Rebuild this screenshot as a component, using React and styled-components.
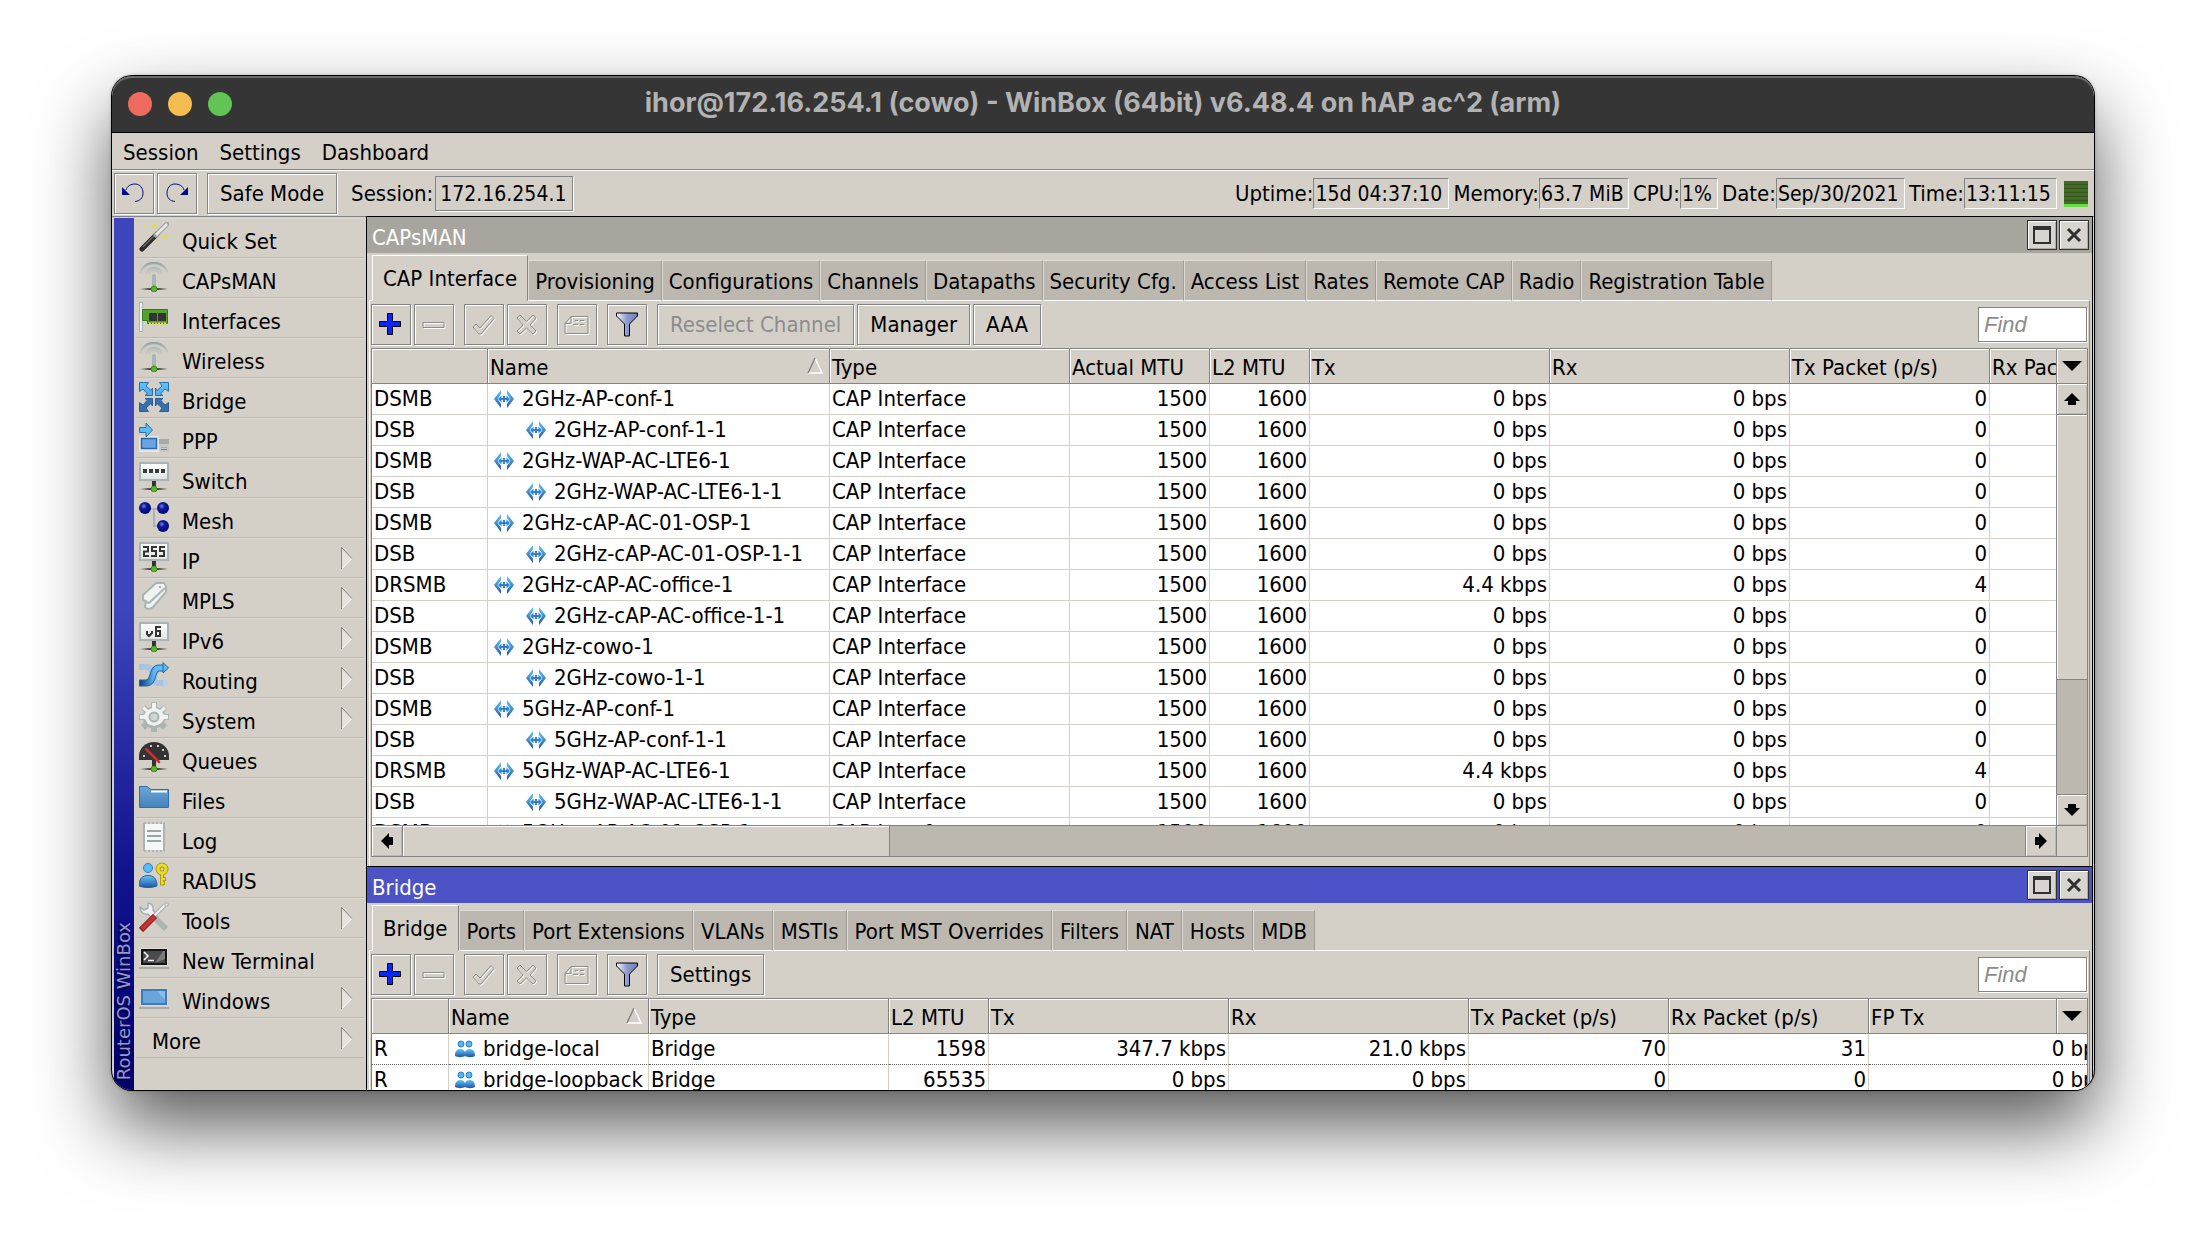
import React, { useState } from "react";
import styled, { createGlobalStyle, css } from "styled-components";

const GlobalStyle = createGlobalStyle`
    * {
        box-sizing: border-box;
    }
    body {
        margin: 0;
        background: #fff;
        color: #000;
        font-family: "DejaVu Sans Condensed", "DejaVu Sans", Tahoma, sans-serif;
        font-size: 22px;
        font-stretch: condensed;
    }
    button, input {
        font: inherit;
        color: inherit;
        margin: 0;
        border-radius: 0;
    }
`;

const raised = css`
    background: #d4d0c8;
    border: 1px solid #848484;
    box-shadow: 1px 1px 0 #fff, inset 1px 1px 0 #fff;
`;

const Desktop = styled.div`
    height: 100vh;
    padding: 76px 112px 148px;
    overflow: hidden;
`;

const Window = styled.div`
    height: 100%;
    display: flex;
    flex-direction: column;
    overflow: hidden;
    background: #d4d0c8;
    border-radius: 20px;
    box-shadow: 0 0 0 1px #000, 0 0 4px rgba(0, 0, 0, 0.3), 0 36px 76px rgba(0, 0, 0, 0.66);
`;

const TitleBar = styled.header`
    flex: none;
    height: 57px;
    display: grid;
    grid-template-columns: 1fr auto 1fr;
    align-items: center;
    padding: 0 16px;
    background: #353535;
    border-bottom: 1px solid #000;
    box-shadow: inset 0 2px 0 #6b6b6b;
    border-radius: 20px 20px 0 0;
    h1 {
        margin: 0;
        padding-bottom: 4px;
        font: bold 27px Inter, sans-serif;
        color: #b2b2b2;
    }
`;

const Lights = styled.div`
    display: flex;
    gap: 16px;
`;

const Light = styled.button`
    width: 24px;
    height: 24px;
    padding: 0;
    border: none;
    border-radius: 50%;
    background: ${(p) => p.$color};
`;

const MenuBar = styled.nav`
    flex: none;
    display: flex;
    gap: 21px;
    height: 37px;
    padding: 2px 11px 0;
    border-bottom: 1px solid #848484;
    button {
        padding: 0;
        border: none;
        background: none;
    }
`;

const MainBar = styled.div`
    flex: none;
    display: flex;
    align-items: center;
    height: 47px;
    padding: 0 6px 0 2px;
    border-top: 1px solid #fff;
    border-bottom: 1px solid #848484;
`;

const ToolButton = styled.button`
    ${raised}
    flex: none;
    height: 41px;
    min-width: 40px;
    display: flex;
    align-items: center;
    justify-content: center;
    padding: 0 ${(p) => (p.$text ? 12 : 0)}px;
    margin-right: ${(p) => (p.$last ? 10 : 3)}px;
    &:disabled {
        color: #8c8c8c;
    }
`;

const SessionLabel = styled.label`
    display: flex;
    align-items: center;
    gap: 2px;
    margin-left: 4px;
`;

const ReadOut = styled.input`
    width: ${(p) => p.$w}px;
    height: ${(p) => p.$h || 31}px;
    padding: 0 1px;
    font-size: 21px;
    background: #d4d0c8;
    border: 1px solid;
    border-color: #848484 #fff #fff #848484;
    outline: none;
`;

const SessionBox = styled(ReadOut)`
    padding: 0 4px;
    border-color: #848484;
    box-shadow: 1px 1px 0 #fff;
`;

const Status = styled.div`
    margin-left: auto;
    display: flex;
    align-items: center;
    gap: 4px;
    label {
        display: flex;
        align-items: center;
    }
`;

const CpuGraph = styled.div`
    width: 24px;
    height: 26px;
    margin-left: 3px;
    border-bottom: 3px solid #62e043;
    background: repeating-linear-gradient(#436b26 0 3px, #35561c 3px 4px);
`;

const Body = styled.div`
    flex: 1;
    min-height: 0;
    display: grid;
    grid-template-columns: 254px minmax(0, 1fr);
`;

const Sidebar = styled.aside`
    display: flex;
    min-height: 0;
    padding: 1px 2px 0;
`;

const Strip = styled.div`
    width: 20px;
    display: flex;
    align-items: center;
    padding-bottom: 10px;
    background: linear-gradient(#3d44bc 0 45%, #10148c 75%, #00006c);
    span {
        margin-top: auto;
        writing-mode: vertical-rl;
        transform: rotate(180deg);
        font: 18px/20px "DejaVu Sans", sans-serif;
        font-stretch: normal;
        white-space: nowrap;
        color: #9797c8;
        text-shadow: -2px -2px 2px #000040;
    }
`;

const MenuList = styled.ul`
    flex: 1;
    margin: 0;
    padding: 0 0 0 2px;
    list-style: none;
`;

const MenuItem = styled.button`
    width: 100%;
    height: 40px;
    display: flex;
    align-items: flex-start;
    padding: 4px 11px 0 3px;
    border: none;
    border-bottom: 1px solid #bcb8b0;
    box-shadow: inset 0 1px 0 #dedad4;
    background: none;
    text-align: left;
    svg {
        flex: none;
    }
    span {
        flex: 1;
        line-height: 36px;
        padding-top: 2px;
        padding-left: 13px;
    }
`;

const Panels = styled.main`
    display: grid;
    grid-template-rows: minmax(0, 650fr) minmax(0, 224fr);
    min-height: 0;
    margin-top: -1px;
    margin-right: 1px;
`;

const Panel = styled.section`
    min-height: 0;
    display: flex;
    flex-direction: column;
    overflow: hidden;
    border: 1px solid #000;
    border-bottom: none;
`;

const PanelTitle = styled.div`
    flex: none;
    height: 36px;
    display: flex;
    align-items: center;
    gap: 2px;
    padding: 0 3px 0 5px;
    color: #fff;
    background: ${(p) => (p.$active ? "#4b53c6" : "#a8a59f")};
    h2 {
        flex: 1;
        margin: 0;
        padding-top: 4px;
        font-size: 22px;
        font-weight: normal;
    }
`;

const TitleButton = styled.button`
    width: 30px;
    height: 30px;
    display: grid;
    place-items: center;
    padding: 0;
    background: #d8d4d0;
    border: 1px solid #303030;
    box-shadow: inset 1px 1px 0 #fff, inset -1px -1px 0 #b0aca4;
`;

const Tabs = styled.div`
    flex: none;
    height: 48px;
    display: flex;
    align-items: flex-end;
    padding-left: 5px;
    margin-bottom: -1px;
    z-index: 1;
`;

const Tab = styled.button`
    height: 41px;
    padding: 2px ${(p) => (p.$tight ? 6 : 7)}px 0;
    white-space: nowrap;
    border: 1px solid;
    border-color: #e0dcd6 #a09c96 #fff #dedad4;
    background: #bcb8b0;
    ${(p) =>
        p.$active &&
        css`
            height: 46px;
            padding: 0 10px;
            background: #d4d0c8;
            border-color: #fff #848484 #d4d0c8 #fff;
        `}
`;

const Frame = styled.div`
    flex: 1;
    min-height: 0;
    display: flex;
    flex-direction: column;
    margin: 0 2px;
    padding: 0 1px ${(p) => p.$bottom}px;
    border: 1px solid;
    border-color: #fff #848484 transparent #fff;
    border-bottom: none;
`;

const Toolbar = styled.div`
    flex: none;
    display: flex;
    align-items: center;
    padding: 3px 1px 3px 0;
`;

const Find = styled.input`
    width: 109px;
    height: 35px;
    margin-left: auto;
    padding: 0 5px;
    background: #fff;
    border: 1px solid #848484;
    box-shadow: 1px 1px 0 #fff;
    font-family: "Liberation Sans", Arial, sans-serif;
    &::placeholder {
        color: #8c8c8c;
        font-style: italic;
        opacity: 1;
    }
`;

const Grid = styled.div`
    position: relative;
    flex: 1;
    min-height: 0;
    display: grid;
    grid-template-columns: minmax(0, 1fr) auto;
    grid-template-rows: minmax(0, 1fr) auto;
    border: 1px solid #848484;
    ${(p) => p.$cut && "border-bottom: none;"}
    background: #fff;
`;

const Scroller = styled.div`
    overflow: hidden;
`;

const Table = styled.table`
    width: 100%;
    table-layout: fixed;
    border-collapse: separate;
    border-spacing: 0;
    th, td {
        padding: 0 2px;
        overflow: hidden;
        white-space: nowrap;
        text-align: left;
        font-weight: normal;
    }
    th {
        height: 35px;
        padding-top: 2px;
        background: #d4d0c8;
        border-right: 1px solid #848484;
        border-bottom: 1px solid #848484;
        box-shadow: inset 1px 1px 0 #fff;
    }
    td {
        height: 31px;
        line-height: 30px;
        border-right: 1px solid #d4d0c8;
        border-bottom: 1px solid #d4d0c8;
    }
    td.num {
        text-align: right;
    }
    tr.current td {
        border-bottom: 1px dotted #606060;
    }
`;

const HeadSort = styled.div`
    display: flex;
    align-items: center;
    justify-content: space-between;
    padding-right: 4px;
    svg {
        margin-bottom: 4px;
    }
`;

const NameCell = styled.div`
    display: flex;
    align-items: center;
    gap: 8px;
    padding-left: ${(p) => (p.$child ? 36 : 4)}px;
    height: 30px;
`;

const DropButton = styled.button`
    position: absolute;
    top: 0;
    right: 0;
    width: 31px;
    height: 35px;
    display: grid;
    place-items: center;
    padding: 0;
    background: #d4d0c8;
    border: none;
    border-left: 1px solid #848484;
    border-bottom: 1px solid #848484;
    box-shadow: inset 1px 1px 0 #fff;
`;

const ScrollButton = styled.button`
    flex: none;
    width: 30px;
    height: 30px;
    display: grid;
    place-items: center;
    padding: 0;
    border: none;
    background: #d4d0c8;
    box-shadow: inset 1px 1px 0 #fff, inset -1px -1px 0 #bcb8b0;
`;

const VScroll = styled.div`
    width: 31px;
    padding-top: 35px;
    display: flex;
    flex-direction: column;
    border-left: 1px solid #848484;
    background: #bcb8b0;
`;

const HScroll = styled.div`
    display: flex;
    height: 31px;
    border-top: 1px solid #848484;
    background: #bcb8b0;
`;

const Corner = styled.div`
    background: #d4d0c8;
    border-top: 1px solid #848484;
    border-left: 1px solid #848484;
`;

const Track = styled.div`
    flex: 1;
    border: 0 solid #848484;
    border-width: ${(p) => (p.$vertical ? "1px 0" : "0 1px")};
`;

const Thumb = styled.div`
    background: #d4d0c8;
    box-shadow: inset 1px 1px 0 #fff;
    ${(p) =>
        p.$vertical
            ? css`
                  height: 70%;
                  border-bottom: 1px solid #848484;
              `
            : css`
                  width: 30%;
                  height: 100%;
                  border-right: 1px solid #848484;
              `}
`;

const Defs = () => (
    <svg width="0" height="0" style={{ display: "block" }} aria-hidden="true">
        <defs>
            <linearGradient id="sky" x1="0" y1="0" x2="0" y2="30" gradientUnits="userSpaceOnUse">
                <stop offset="0" stopColor="#5cc4ff" />
                <stop offset="0.45" stopColor="#4fabec" />
                <stop offset="1" stopColor="#1d4785" />
            </linearGradient>
            <linearGradient id="skyBox" x1="0" y1="0" x2="0" y2="1">
                <stop offset="0" stopColor="#62c6fa" />
                <stop offset="1" stopColor="#1f559f" />
            </linearGradient>
            <linearGradient id="route" x1="0" y1="0" x2="1" y2="0">
                <stop offset="0" stopColor="#123f80" />
                <stop offset="0.6" stopColor="#5ab8f8" />
                <stop offset="1" stopColor="#58c4ff" />
            </linearGradient>
            <linearGradient id="white" x1="0" y1="0" x2="0" y2="1">
                <stop offset="0" stopColor="#fff" />
                <stop offset="1" stopColor="#dfe3e3" />
            </linearGradient>
            <linearGradient id="folder" x1="0" y1="0" x2="0" y2="1">
                <stop offset="0" stopColor="#6aa6dc" />
                <stop offset="1" stopColor="#4582b8" />
            </linearGradient>
            <linearGradient id="waves" x1="0" y1="0" x2="0" y2="15" gradientUnits="userSpaceOnUse">
                <stop offset="0" stopColor="#92a09e" />
                <stop offset="1" stopColor="#c0c8c6" stopOpacity="0.2" />
            </linearGradient>
            <linearGradient id="wire" x1="0" y1="0" x2="1" y2="0">
                <stop offset="0" stopColor="#333" stopOpacity="0" />
                <stop offset="0.4" stopColor="#333" />
                <stop offset="0.6" stopColor="#333" />
                <stop offset="1" stopColor="#333" stopOpacity="0" />
            </linearGradient>
            <radialGradient id="ball" cx="0.4" cy="0.35" r="0.6">
                <stop offset="0" stopColor="#6f86e8" />
                <stop offset="0.4" stopColor="#101a98" />
                <stop offset="1" stopColor="#000a78" />
            </radialGradient>
            <linearGradient id="funnel" x1="0" y1="0" x2="1" y2="0">
                <stop offset="0" stopColor="#f4f6ff" />
                <stop offset="0.5" stopColor="#8b9bd0" />
                <stop offset="1" stopColor="#6f80bc" />
            </linearGradient>
        </defs>
    </svg>
);

const Wire = () => (
    <>
        <rect x="1" y="26" width="28" height="2" fill="url(#wire)" />
        <circle cx="15" cy="27" r="3" fill="#5cb431" stroke="#3f8a1d" />
    </>
);

const Sign = ({ children }) => (
    <>
        <rect x="13" y="18" width="4" height="8" fill="#333" />
        <rect x="1" y="1" width="28" height="17" fill="url(#white)" stroke="#a9b5b4" strokeWidth="2" />
        {children}
        <Wire />
    </>
);

const Antenna = () => (
    <>
        <path d="M1 11C7 -2.500 23 -2.500 29 11M7 12C10 4 20 4 23 12" fill="none" stroke="url(#waves)" strokeWidth="2.500" />
        <path d="M4 12C9 1 21 1 26 12" fill="none" stroke="#c4cac6" opacity="0.500" />
        <path d="M10 12C12 7 18 7 20 12" fill="none" stroke="#b4bebb" strokeWidth="2" opacity="0.600" />
        <rect x="13" y="12" width="4" height="14" rx="2" fill="#aab6b4" />
        <Wire />
    </>
);

const bridgeArrow = "M.5 .5H9.500L7 4L12 8.500L13.500 6V13.500H6L8.500 12L4 7L.5 9.500Z";

const icons = {
    wand: (
        <>
            <path d="M3 27L18 12" stroke="#2b2b2b" strokeWidth="5" strokeLinecap="round" />
            <path d="M4 25L16 13" stroke="#666" strokeWidth="1.500" />
            <path d="M17 13L28 2" stroke="#a4a4a4" strokeWidth="5" strokeLinecap="round" />
            <path d="M17 13L28 2" stroke="#e8e8e8" strokeWidth="2.500" />
            <path d="M15 0l1 2.500 2.800 1-2.800 1-1 2.500-1-2.500-2.800-1 2.800-1zM26 12l1 2 2.500 1-2.500 1-1 2.500-1-2.500-2.500-1 2.500-1z" fill="#e4df3c" />
            <path d="M4 3h2v2h-2zM17 20h2v2h-2z" fill="#e4df3c" />
        </>
    ),
    antenna: <Antenna />,
    card: (
        <>
            <rect x="0.500" y=".5" width="3" height="29" fill="#eceeee" stroke="#a9b5b4" />
            <path d="M3.500 7.500H28.500V21.500H8.500V18.500H3.500Z" fill="#54a330" stroke="#357a1b" />
            <path d="M10 11H18V19H10ZM19 11H27V19H19Z" fill="#333" />
            <path d="M10 21.500H28" stroke="#f2e02e" strokeWidth="2" strokeDasharray="2 1" />
        </>
    ),
    bridge: (
        <>
            <g fill="url(#sky)" stroke="#2f6ea8">
                <path d={bridgeArrow} />
                <path d={bridgeArrow} transform="matrix(-1 0 0 1 30 0)" />
            </g>
            <g fill="#3670ae" stroke="#2a5f96">
                <path d={bridgeArrow} transform="matrix(1 0 0 -1 0 30)" />
                <path d={bridgeArrow} transform="matrix(-1 0 0 -1 30 30)" />
            </g>
        </>
    ),
    ppp: (
        <>
            <rect x="0" y="14" width="20" height="16" fill="#e4e6e6" />
            <rect x="20" y="17" width="10" height="13" fill="#c8c8c6" />
            <rect x="20" y="17" width="10" height="5" fill="#a9a9a7" />
            <path d="M22 25.500H28" stroke="#aaa" />
            <path d="M22 27.500H28" stroke="#54a330" />
            <rect x="2.500" y="16.500" width="15" height="10" fill="#68a4e0" stroke="#2f69a5" strokeWidth="1.500" />
            <path d="M.5 5.500H7V1L13.500 8L7 15V10.500H.5Z" fill="#58bdf8" stroke="#3a6f9c" />
        </>
    ),
    switch: (
        <Sign>
            <path d="M4 7h4v4h-4zM10 7h4v4h-4zM16 7h4v4h-4zM22 7h4v4h-4z" fill="#3a3a3a" />
        </Sign>
    ),
    mesh: (
        <>
            <path d="M6 7H24M15 7V24H24" stroke="#a9b5b4" strokeWidth="2" fill="none" />
            <circle cx="6" cy="6" r="6" fill="url(#ball)" />
            <circle cx="24" cy="6" r="6" fill="url(#ball)" />
            <circle cx="24" cy="24" r="6" fill="url(#ball)" />
        </>
    ),
    ip: (
        <Sign>
            <path d="M4 5H9V9.500H5V14H10M18 5H13V9H17V14H12M26 5H21V9H25V14H20" fill="none" stroke="#333" strokeWidth="2" />
        </Sign>
    ),
    clip: (
        <>
            <path d="M17 1H25L27 4V10L14 25C12 27 8 28 6 25L7 19L4 18V13Z" fill="#f1f2f2" stroke="#a9b5b4" strokeWidth="2" strokeLinejoin="round" />
            <path d="M7 20L10 21L26 6" fill="none" stroke="#a9b5b4" strokeWidth="2" />
            <circle cx="21" cy="5" r="1" fill="#8b9593" />
        </>
    ),
    ipv6: (
        <Sign>
            <path d="M8 9V12L10 14L13 11V9M22 5H17V14H21V9H17" fill="none" stroke="#333" strokeWidth="2" />
        </Sign>
    ),
    routing: (
        <>
            <path d="M0 5H8C16 5 12 21 19 21H24" fill="none" stroke="#a9c4de" strokeWidth="6" />
            <path d="M24 15.500L30 21L24 27Z" fill="#b8d0e8" />
            <path d="M0 21H7C16 21 12 6 20 6H24" fill="none" stroke="#2c6398" strokeWidth="7" />
            <path d="M1 21H7C16 21 12 6 20 6H25" fill="none" stroke="url(#route)" strokeWidth="5" />
            <path d="M24 .5L29.500 6L24 11Z" fill="#58bdf8" stroke="#2c6398" />
        </>
    ),
    gear: (
        <>
            <path
                d="M12 0H18V5L21 6L25 3L28 7L25 10L26 12H30V18H26L25 20L28 23L24 28L21 25L18 26V30H12V26L9 25L6 28L2 23L5 20L4 18H0V12H4L5 10L2 7L6 3L9 6L12 5Z"
                fill="#a9b5b4"
            />
            <path
                d="M13 1H17V6L21 8L25 4L27 7L23 10L25 13H29V17H25L23 20L21 22L15 24L9 22L6 17H1V13H5L7 10L3 7L5 4L9 8L13 6Z"
                fill="#f0f1f1"
            />
            <circle cx="15" cy="15" r="4.500" fill="#d4d4ce" stroke="#a9b5b4" strokeWidth="2" />
        </>
    ),
    gauge: (
        <>
            <rect x="13" y="18" width="4" height="8" fill="#333" />
            <path d="M0 18V14C0 6 7 0 15 0C23 0 30 6 30 14V18Z" fill="#333" />
            <path d="M4 13h2v2h-2zM11 3h2v2h-2zM18 3h2v2h-2zM23 7h2v2h-2zM25 13h2v2h-2z" fill="#ccc" />
            <path d="M7 7L20 20" stroke="#c53030" strokeWidth="2.500" strokeLinecap="round" />
            <Wire />
        </>
    ),
    folder: (
        <>
            <path d="M.5 25.500V4.500H8L12 7.500H29.500V25.500Z" fill="url(#folder)" stroke="#2f6fa8" />
            <path d="M12 9.500H28" stroke="#fff" strokeWidth="2" />
        </>
    ),
    log: (
        <>
            <path d="M5 1V29M25 1V29" stroke="#a9b5b4" strokeWidth="2" />
            <path d="M6 2H24V28H6Z" fill="#f6f7f7" />
            <path d="M5 1H26M5 29H26" stroke="#a9b5b4" strokeWidth="2" strokeDasharray="2 2" />
            <path d="M8 9H22M8 14H22M8 19H22" stroke="#98a6a4" strokeWidth="2" />
        </>
    ),
    radius: (
        <>
            <path d="M0 24C0 16 4 13.500 9 13.500S18 16 18 24C13 26 5 26 0 24Z" fill="url(#skyBox)" stroke="#2b5f99" />
            <circle cx="9" cy="6" r="4.500" fill="#58bdf8" stroke="#3478b4" />
            <circle cx="23" cy="7" r="4" fill="none" stroke="#b09c10" strokeWidth="5" />
            <path d="M23 11V23.500M23 17H27M23 21H26" stroke="#b09c10" strokeWidth="4" />
            <circle cx="23" cy="7" r="4" fill="none" stroke="#e6d930" strokeWidth="3" />
            <path d="M23 11V22.500M24 17H26M24 21H25" stroke="#e6d930" strokeWidth="2" />
        </>
    ),
    tools: (
        <>
            <path d="M15 15L27 27" stroke="#aab6b4" strokeWidth="6" />
            <path d="M1 5L5 8L9 6V1C12 1 15 4 14 8L18 13L13 17L9 12C5 13 1 10 1 5Z" fill="#eef0f0" stroke="#a2b0ae" strokeWidth="1.500" />
            <path d="M14 15L26 3" stroke="#a2b0ae" strokeWidth="4" />
            <path d="M14 15L27 2" stroke="#f2f4f4" strokeWidth="2" />
            <path d="M26 1h3v3h-3z" fill="#eef0f0" stroke="#a2b0ae" />
            <path d="M2 28L16 14" stroke="#8c1c1c" strokeWidth="6" />
            <path d="M3 27L16 14" stroke="#bf3434" strokeWidth="4" />
        </>
    ),
    terminal: (
        <>
            <rect x="1" y="6" width="28" height="18" fill="#dcdcdc" />
            <rect x="3" y="8" width="24" height="14" fill="#4a4a4a" stroke="#141414" strokeWidth="2" />
            <path d="M24 9L26 9V17L16 21Z" fill="#7c7c7c" />
            <path d="M5 10L9 14L5 18M9 18.500H15" fill="none" stroke="#fff" strokeWidth="1.500" />
            <rect x="0" y="25" width="30" height="2" fill="#a9a9a9" />
        </>
    ),
    windows: (
        <>
            <rect x="1" y="6" width="28" height="18" fill="#d2d4d6" />
            <rect x="3" y="8" width="24" height="14" fill="#6aa4dd" stroke="#3f7cb4" strokeWidth="2" />
            <path d="M18 9H26V18Z" fill="#8dbce8" />
            <rect x="0" y="25" width="30" height="2" fill="#a9a9a9" />
        </>
    ),
};

const Icon = ({ name, size = 30 }) => (
    <svg width={size} height={size} viewBox="0 0 30 30" fill="none" aria-hidden="true">
        {icons[name]}
    </svg>
);

const Arrow = styled.svg`
    margin-top: 5px;
`;

const SubArrow = () => (
    <Arrow width="12" height="23" viewBox="0 0 12 23" aria-hidden="true">
        <path d="M.5 .5L11 11.500L.5 22Z" fill="#e6e3dd" />
        <path d="M11 11.500L.5 22" stroke="#fff" />
        <path d="M.5 22V.5L11 11.500" fill="none" stroke="#848484" />
    </Arrow>
);

const CapIcon = () => (
    <svg width="20" height="18" viewBox="0 0 20 18" fill="none" aria-hidden="true">
        <path d="M7 0L0 9L7 18V14L3.500 9L7 4ZM13 0L20 9L13 18V14L16.500 9L13 4Z" fill="url(#skyBox)" />
        <path d="M4 9L7.500 5.500V8H9V6H11V8H12.500V5.500L16 9L12.500 12.500V10H11V12H9V10H7.500V12.500Z" fill="#2f83cc" />
    </svg>
);

const BridgeIcon = () => (
    <svg width="20" height="18" viewBox="0 0 20 18" fill="none" aria-hidden="true">
        <circle cx="6" cy="4" r="3" fill="#55b8f4" stroke="#2f79b6" />
        <circle cx="14" cy="4" r="3" fill="#55b8f4" stroke="#2f79b6" />
        <path d="M0 16C0 11 2 9 5.500 9C8 9 9 10 10 12C11 10 12 9 14.500 9C18 9 20 11 20 16C16 18 12 17 10 16C8 17 4 18 0 16Z" fill="url(#skyBox)" />
    </svg>
);

const RotateIcon = ({ flip }) => (
    <svg width="24" height="22" viewBox="0 0 24 22" fill="none" aria-hidden="true">
        <g transform={flip ? "matrix(-1 0 0 1 23 0)" : undefined}>
            <path d="M4 7C5 3 9 1 13 1C18 1 21 5 21 10C21 15 18 18 13 18.500" stroke="#000b80" strokeWidth="1" />
            <path d="M0 4V12H8Z" fill="#000b80" />
        </g>
    </svg>
);

const AddIcon = () => (
    <svg width="24" height="23" viewBox="0 0 24 23" aria-hidden="true">
        <path d="M8.500.5H13.500V8.500H21.500V13.500H13.500V21.500H8.500V13.500H.5V8.500H8.500Z" fill="#0a26ff" stroke="#000" />
    </svg>
);

// disabled glyphs are a grey outline with a white one below it
const Etched = ({ d }) => (
    <svg width="26" height="24" viewBox="0 0 26 24" fill="none" aria-hidden="true">
        <path d={d} stroke="#fff" transform="translate(1 1)" />
        <path d={d} stroke="#8c8c8c" />
    </svg>
);

const FilterIcon = () => (
    <svg width="22" height="25" viewBox="0 0 22 25" aria-hidden="true">
        <path d="M.5 1H21.500V4L13.500 12V24H8.500V12L.5 4Z" fill="url(#funnel)" stroke="#000" />
    </svg>
);

const ArrowIcon = ({ turn = 0 }) => (
    <svg width="16" height="16" viewBox="0 0 16 16" aria-hidden="true">
        <path d="M8 2L16 10H12V14H4V10H0Z" transform={`rotate(${turn} 8 8)`} />
    </svg>
);

const SortIcon = () => (
    <svg width="16" height="17" viewBox="0 0 16 17" fill="none" aria-hidden="true">
        <path d="M8 1L15 16H1" stroke="#fff" strokeWidth="1.500" />
        <path d="M1 16L8 1" stroke="#848484" strokeWidth="1.500" />
    </svg>
);

const menu = [
    { label: "Quick Set", icon: "wand" },
    { label: "CAPsMAN", icon: "antenna" },
    { label: "Interfaces", icon: "card" },
    { label: "Wireless", icon: "antenna" },
    { label: "Bridge", icon: "bridge" },
    { label: "PPP", icon: "ppp" },
    { label: "Switch", icon: "switch" },
    { label: "Mesh", icon: "mesh" },
    { label: "IP", icon: "ip", sub: true },
    { label: "MPLS", icon: "clip", sub: true },
    { label: "IPv6", icon: "ipv6", sub: true },
    { label: "Routing", icon: "routing", sub: true },
    { label: "System", icon: "gear", sub: true },
    { label: "Queues", icon: "gauge" },
    { label: "Files", icon: "folder" },
    { label: "Log", icon: "log" },
    { label: "RADIUS", icon: "radius" },
    { label: "Tools", icon: "tools", sub: true },
    { label: "New Terminal", icon: "terminal" },
    { label: "Windows", icon: "windows", sub: true },
    { label: "More", sub: true },
];

const status = [
    ["Uptime", "15d 04:37:10", 136],
    ["Memory", "63.7 MiB", 90],
    ["CPU", "1%", 38],
    ["Date", "Sep/30/2021", 129],
    ["Time", "13:11:15", 93],
];

const capTabs = [
    "CAP Interface", "Provisioning", "Configurations", "Channels", "Datapaths", "Security Cfg.",
    "Access List", "Rates", "Remote CAP", "Radio", "Registration Table",
];
const bridgeTabs = [
    "Bridge", "Ports", "Port Extensions", "VLANs", "MSTIs", "Port MST Overrides",
    "Filters", "NAT", "Hosts", "MDB",
];

const capColumns = [
    ["", 116], ["Name", 342], ["Type", 240], ["Actual MTU", 140], ["L2 MTU", 100],
    ["Tx", 240], ["Rx", 240], ["Tx Packet (p/s)", 200], ["Rx Packet (p/s)", 200],
];
const bridgeColumns = [
    ["", 77], ["Name", 200], ["Type", 240], ["L2 MTU", 100], ["Tx", 240],
    ["Rx", 240], ["Tx Packet (p/s)", 200], ["Rx Packet (p/s)", 200], ["FP Tx", 240],
];

const capNames = [
    ["2GHz-AP-conf-1"], ["2GHz-WAP-AC-LTE6-1"], ["2GHz-cAP-AC-01-OSP-1"],
    ["2GHz-cAP-AC-office-1", true], ["2GHz-cowo-1"], ["5GHz-AP-conf-1"],
    ["5GHz-WAP-AC-LTE6-1", true], ["5GHz-cAP-AC-01-OSP-1"],
];

const capRow = (flag, name, busy, child) => ({
    flag,
    name,
    child,
    type: "CAP Interface",
    nums: ["1500", "1600", busy ? "4.4 kbps" : "0 bps", "0 bps", busy ? "4" : "0", ""],
});

// every master interface is followed by its own slave
const capRows = capNames
    .flatMap(([name, busy]) => [
        capRow(busy ? "DRSMB" : "DSMB", name, busy, false),
        capRow("DSB", `${name}-1`, false, true),
    ])
    .slice(0, 15);

const bridgeRows = [
    { flag: "R", name: "bridge-local", type: "Bridge", current: true, nums: ["1598", "347.7 kbps", "21.0 kbps", "70", "31", "0 bps"] },
    { flag: "R", name: "bridge-loopback", type: "Bridge", nums: ["65535", "0 bps", "0 bps", "0", "0", "0 bps"] },
];

const DataTable = ({ columns, rows, icon }) => (
    <Table>
        <colgroup>
            {columns.map(([name, width]) => (
                <col key={name} width={width} />
            ))}
        </colgroup>
        <thead>
            <tr>
                {columns.map(([name]) => (
                    <th key={name} scope="col">
                        {name === "Name" ? <HeadSort>{name}<SortIcon /></HeadSort> : name}
                    </th>
                ))}
            </tr>
        </thead>
        <tbody>
            {rows.map((row) => (
                <tr key={row.name} className={row.current ? "current" : undefined}>
                    <td>{row.flag}</td>
                    <td>
                        <NameCell $child={row.child}>{icon}{row.name}</NameCell>
                    </td>
                    <td>{row.type}</td>
                    {row.nums.map((num, i) => (
                        <td className="num" key={i}>{num}</td>
                    ))}
                </tr>
            ))}
        </tbody>
    </Table>
);

const PanelHead = ({ title, active, tabs, tight }) => {
    const [tab, setTab] = useState(tabs[0]);

    return (
        <>
            <PanelTitle $active={active}>
                <h2>{title}</h2>
                <TitleButton aria-label="Maximize">
                    <svg width="18" height="18" viewBox="0 0 18 18" aria-hidden="true">
                        <path d="M1 3V17H17V3" fill="none" stroke="#303030" strokeWidth="2" />
                        <path d="M0 0H18V4H0Z" fill="#303030" />
                    </svg>
                </TitleButton>
                <TitleButton aria-label="Close">
                    <svg width="16" height="16" viewBox="0 0 16 16" aria-hidden="true">
                        <path d="M2 2L14 14M14 2L2 14" stroke="#303030" strokeWidth="3" />
                    </svg>
                </TitleButton>
            </PanelTitle>
            <Tabs role="tablist">
                {tabs.map((name) => (
                    <Tab
                        key={name}
                        role="tab"
                        aria-selected={name === tab}
                        $active={name === tab}
                        $tight={tight}
                        onClick={() => setTab(name)}
                    >
                        {name}
                    </Tab>
                ))}
            </Tabs>
        </>
    );
};

const PanelTools = ({ children }) => (
    <Toolbar>
        <ToolButton aria-label="Add"><AddIcon /></ToolButton>
        <ToolButton aria-label="Remove" disabled $last>
            <Etched d="M2 9.500H23V14.500H2Z" />
        </ToolButton>
        <ToolButton aria-label="Enable" disabled>
            <Etched d="M2 14L5 11L9 15L20 2.500L23 5.500L10 21H8Z" />
        </ToolButton>
        <ToolButton aria-label="Disable" disabled $last>
            <Etched d="M6 2L12.500 8.500L19 2L22 5L16 12L22 18L19 21L12.500 15L6 21L3 18L9 12L3 5Z" />
        </ToolButton>
        <ToolButton aria-label="Comment" disabled $last>
            <Etched d="M7 3.500H24V20.500H1V10.500L7 3.500V10.500H1M11 7.500H14M16 7.500H20M9 11.500H14M16 11.500H20" />
        </ToolButton>
        <ToolButton aria-label="Filter" $last><FilterIcon /></ToolButton>
        {children}
        <Find placeholder="Find" aria-label="Find" />
    </Toolbar>
);

const Drop = () => (
    <DropButton aria-label="Show columns">
        <svg width="20" height="10" viewBox="0 0 20 10" aria-hidden="true">
            <path d="M0 0H20L10 10Z" />
        </svg>
    </DropButton>
);

const App = () => {
    return (
        <Desktop>
            <GlobalStyle />
            <Defs />
            <Window>
                <TitleBar>
                    <Lights>
                        <Light $color="#ed6a5e" aria-label="Close window" />
                        <Light $color="#f5bd4f" aria-label="Minimize window" />
                        <Light $color="#61c454" aria-label="Zoom window" />
                    </Lights>
                    <h1>ihor@172.16.254.1 (cowo) - WinBox (64bit) v6.48.4 on hAP ac^2 (arm)</h1>
                </TitleBar>
                <MenuBar>
                    <button>Session</button>
                    <button>Settings</button>
                    <button>Dashboard</button>
                </MenuBar>
                <MainBar>
                    <ToolButton aria-label="Undo"><RotateIcon /></ToolButton>
                    <ToolButton aria-label="Redo" $last><RotateIcon flip /></ToolButton>
                    <ToolButton $text $last>Safe Mode</ToolButton>
                    <SessionLabel>
                        Session:
                        <SessionBox $w={138} $h={35} readOnly value="172.16.254.1" />
                    </SessionLabel>
                    <Status>
                        {status.map(([name, value, width]) => (
                            <label key={name}>
                                {name}:
                                <ReadOut $w={width} readOnly value={value} />
                            </label>
                        ))}
                        <CpuGraph />
                    </Status>
                </MainBar>
                <Body>
                    <Sidebar>
                        <Strip><span>RouterOS WinBox</span></Strip>
                        <MenuList>
                            {menu.map(({ label, icon, sub }) => (
                                <li key={label}>
                                    <MenuItem>
                                        {icon && <Icon name={icon} />}
                                        <span>{label}</span>
                                        {sub && <SubArrow />}
                                    </MenuItem>
                                </li>
                            ))}
                        </MenuList>
                    </Sidebar>
                    <Panels>
                        <Panel>
                            <PanelHead title="CAPsMAN" tabs={capTabs} tight />
                            <Frame $bottom={9}>
                                <PanelTools>
                                    <ToolButton $text disabled>Reselect Channel</ToolButton>
                                    <ToolButton $text>Manager</ToolButton>
                                    <ToolButton $text>AAA</ToolButton>
                                </PanelTools>
                                <Grid>
                                    <Scroller>
                                        <DataTable columns={capColumns} rows={capRows} icon={<CapIcon />} />
                                    </Scroller>
                                    <VScroll>
                                        <ScrollButton aria-label="Scroll up"><ArrowIcon /></ScrollButton>
                                        <Track $vertical><Thumb $vertical /></Track>
                                        <ScrollButton aria-label="Scroll down"><ArrowIcon turn={180} /></ScrollButton>
                                    </VScroll>
                                    <HScroll>
                                        <ScrollButton aria-label="Scroll left"><ArrowIcon turn={-90} /></ScrollButton>
                                        <Track><Thumb /></Track>
                                        <ScrollButton aria-label="Scroll right"><ArrowIcon turn={90} /></ScrollButton>
                                    </HScroll>
                                    <Corner />
                                    <Drop />
                                </Grid>
                            </Frame>
                        </Panel>
                        <Panel>
                            <PanelHead title="Bridge" active tabs={bridgeTabs} />
                            <Frame $bottom={0}>
                                <PanelTools>
                                    <ToolButton $text>Settings</ToolButton>
                                </PanelTools>
                                <Grid $cut>
                                    <Scroller>
                                        <DataTable columns={bridgeColumns} rows={bridgeRows} icon={<BridgeIcon />} />
                                    </Scroller>
                                    <Drop />
                                </Grid>
                            </Frame>
                        </Panel>
                    </Panels>
                </Body>
            </Window>
        </Desktop>
    );
};

export default App;
